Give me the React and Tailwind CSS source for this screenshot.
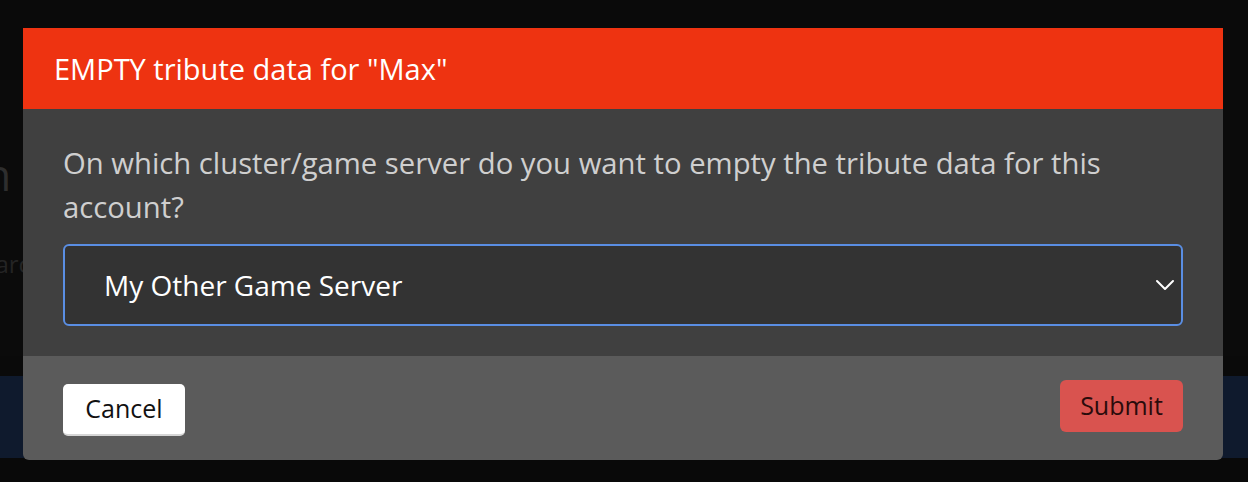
import React from "react";

export default function App() {
  return (
    <div className="relative w-[1248px] h-[482px] overflow-hidden bg-[#0a0a0a]" style={{ fontFamily: '"Open Sans", "Noto Sans", sans-serif' }}>
      {/* dimmed page behind the modal */}
      <div className="flex flex-col h-full">
        <div className="h-[80px] bg-[#0a0a0a]" />
        <div className="h-[276px] bg-[#0b0b0b] flex flex-col overflow-hidden">
          <div className="pt-[72px] -ml-[40px] text-[44px] leading-[44px] text-[#2e2e2e] whitespace-nowrap">Tn</div>
          <div className="pt-[56px] -ml-[16px] text-[24px] leading-[24px] text-[#242424] whitespace-nowrap">sarc</div>
        </div>
        <div className="h-[20px]" />
        <div className="h-[82px] bg-[#0f1a2d]" />
        <div className="flex-1 bg-[#090909]" />
      </div>

      {/* modal */}
      <div className="absolute left-[23px] top-[28px] w-[1200px] flex flex-col rounded-b-[6px] overflow-hidden">
        <div className="h-[81px] bg-[#ee3311] flex items-center px-[31px]">
          <h2 className="text-[29px] text-white">EMPTY tribute data for "Max"</h2>
        </div>
        <div className="bg-[#404040] px-[40px] pt-[32px] pb-[30px] flex flex-col">
          <p className="text-[29.25px] leading-[44px] text-[#cfcfcf]">
            On which cluster/game server do you want to empty the tribute data for this account?
          </p>
          <div className="mt-[15px] h-[82px] rounded-[6px] border-2 border-[#5a8ee3] bg-[#333333] flex items-center justify-between pl-[39px] pr-[6px]">
            <span className="text-[28px] text-white">My Other Game Server</span>
            <svg width="20" height="12" viewBox="0 0 20 12" fill="none" stroke="white" strokeWidth="2" strokeLinecap="round" strokeLinejoin="round">
              <path d="M2 2l8 8 8-8" />
            </svg>
          </div>
        </div>
        <div className="h-[104px] bg-[#5b5b5b] px-[40px] flex justify-between">
          <button className="mt-[28px] h-[52px] w-[122px] rounded-[5px] bg-white border-b-2 border-[#d6d6d6] text-[25px] text-[#111]">Cancel</button>
          <button className="mt-[24px] h-[52px] w-[123px] rounded-[6px] bg-[#d9534f] text-[25px] text-[#2a0b0b]">Submit</button>
        </div>
      </div>
    </div>
  );
}
